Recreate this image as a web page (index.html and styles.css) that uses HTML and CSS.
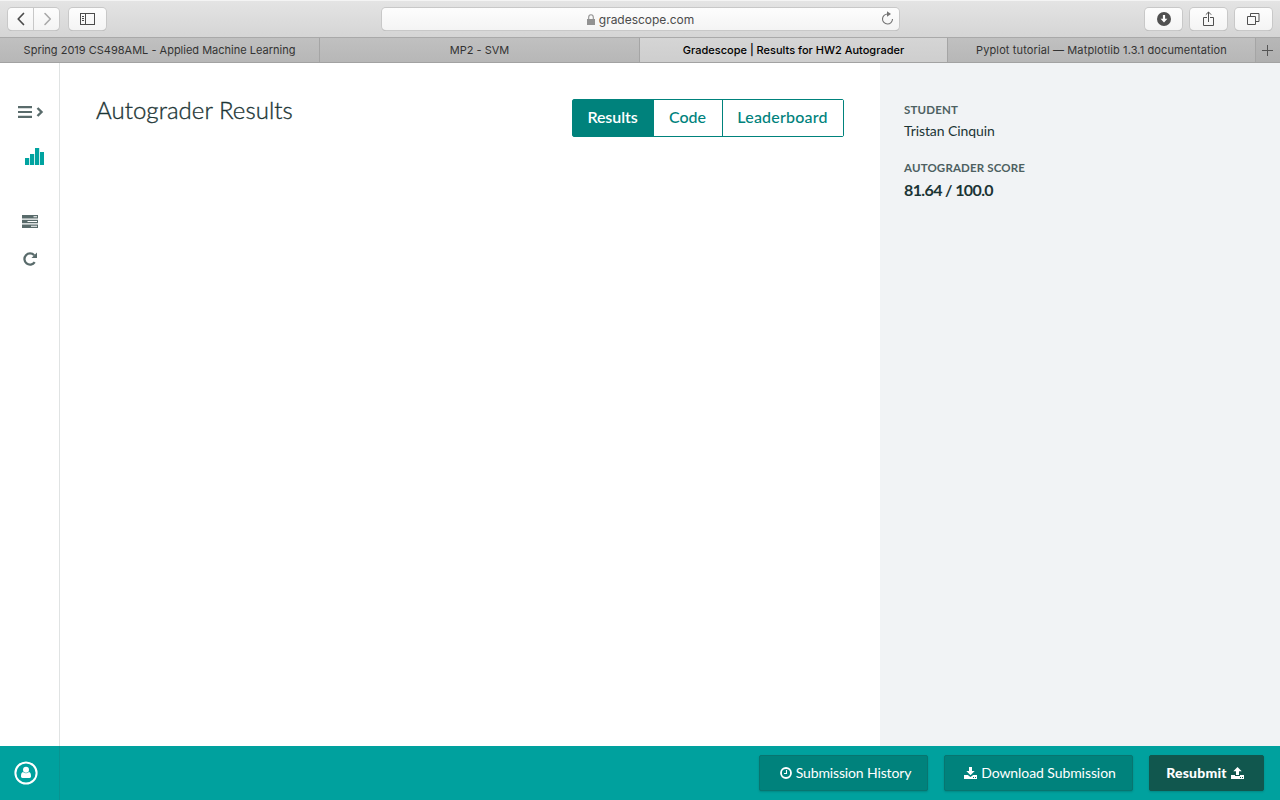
FILE: index.html
```html
<!DOCTYPE html>
<html lang="en">
<head>
<meta charset="utf-8">
<title>Gradescope | Results for HW2 Autograder</title>
<link rel="stylesheet" href="styles.css">
</head>
<body>
<div class="window">
  <header class="toolbar">
    <div class="tool-group">
      <div class="nav-pair">
        <button class="tool nav" aria-label="Back"><svg width="24" height="22" viewBox="0 0 24 22"><path d="M14.500 5.500 9.200 11l5.300 5.500" fill="none" stroke="#4b4b4b" stroke-width="1.700" stroke-linecap="round" stroke-linejoin="round"/></svg></button>
        <button class="tool nav" aria-label="Forward"><svg width="24" height="22" viewBox="0 0 24 22"><path d="m10 5.500 5.300 5.500-5.300 5.500" fill="none" stroke="#a9a9a9" stroke-width="1.600" stroke-linecap="round" stroke-linejoin="round"/></svg></button>
      </div>
      <button class="tool" aria-label="Sidebar"><svg width="16" height="12" viewBox="0 0 16 12" fill="none" stroke="#4b4b4b"><rect x=".5" y=".5" width="14" height="11"/><path d="M5.500 0v12M2 3.500h2M2 5.500h2M2 7.500h2"/></svg></button>
    </div>
    <div class="address">
      <svg width="8" height="11" viewBox="0 0 8 11"><path d="M0 5h8v6H0z" fill="#929292"/><path d="M1.700 5V3.200a2.300 2.400 0 0 1 4.600 0V5" fill="none" stroke="#929292" stroke-width="1.100"/></svg>
      <span class="url">gradescope.com</span>
      <svg class="reload" width="13" height="15" viewBox="0 0 13 15"><path d="M6.700 3A5 5 0 1 0 11.500 8" fill="none" stroke="#737373" stroke-width="1.100"/><path d="M6 .3v5.400L10 3z" fill="#737373"/></svg>
    </div>
    <div class="tool-group right">
      <button class="tool" aria-label="Downloads"><svg width="14" height="14" viewBox="0 0 14 14"><circle cx="7" cy="7" r="7" fill="#505050"/><path d="M5.900 3h2.200v3.700h2.300L7 10.600 3.600 6.700h2.300z" fill="#fff"/></svg></button>
      <button class="tool" aria-label="Share"><svg width="12" height="16" viewBox="0 0 12 16" fill="none" stroke="#505050"><path d="M4 6.500H.5v8h10v-8H7M5.500 11V1M2.800 3.700 5.500 1l2.700 2.700"/></svg></button>
      <button class="tool" aria-label="Tab overview"><svg width="13" height="13" viewBox="0 0 13 13" fill="none" stroke="#505050"><path d="M.5 3.500h8v8h-8zM3.500 3V.5h8.500v8H9"/></svg></button>
    </div>
  </header>
  <nav class="tabs">
    <div class="tab"><span>Spring 2019 CS498AML - Applied Machine Learning</span></div>
    <div class="tab"><span>MP2 - SVM</span></div>
    <div class="tab active"><span>Gradescope | Results for HW2 Autograder</span></div>
    <div class="tab"><span class="spaced">Pyplot tutorial — Matplotlib 1.3.1 documentation</span></div>
    <div class="tab-add"><svg width="12" height="12" viewBox="0 0 12 12"><path d="M0 6.500h11M5.500 1v11" stroke="#555" fill="none"/></svg></div>
  </nav>
  <div class="page">
    <aside class="rail">
      <svg class="menu" width="26" height="12" viewBox="0 0 26 12"><path d="M0 1.100h14M0 6h14M0 10.900h14" stroke="#596b6b" stroke-width="2.200"/><path d="m19.500 2 4 4-4 4" stroke="#596b6b" stroke-width="2.400" fill="none"/></svg>
      <svg class="chart" width="19" height="17" viewBox="0 0 19 17" fill="#00a3a0"><path d="M0 10h4.200v7H0zM5 6h4.200v11H5zM10 0h4.200v17H10zM15 4h4v13h-4z"/></svg>
      <svg class="tasks" width="16" height="13" viewBox="0 0 16 13"><path fill="#596b6b" d="M0 0h16v3.600H0zM0 4.700h16v3.600H0zM0 9.400h16V13H0z"/><path fill="#fff" d="M11.500 1.300H15v1h-3.500zM5.500 6H15v1H5.500zM9 10.700h6v1H9z"/></svg>
      <svg class="redo" width="15" height="14" viewBox="0 0 15 14"><path d="M11.200 3.300A5.600 5.600 0 1 0 11.700 10.200" fill="none" stroke="#596b6b" stroke-width="2.300"/><path d="M14 .5V6H8.500z" fill="#596b6b"/></svg>
    </aside>
    <main class="content">
      <h1>Autograder Results</h1>
      <div class="segmented">
        <button class="seg on"><span>Results</span></button>
        <button class="seg"><span>Code</span></button>
        <button class="seg wide"><span>Leaderboard</span></button>
      </div>
    </main>
    <aside class="details">
      <div class="label">STUDENT</div>
      <div class="name">Tristan Cinquin</div>
      <div class="label">AUTOGRADER SCORE</div>
      <div class="score">81.64 / 100.0</div>
    </aside>
  </div>
  <footer class="actions">
    <div class="account"><svg width="24" height="24" viewBox="0 0 24 24"><circle cx="12" cy="12" r="10.600" fill="none" stroke="#fff" stroke-width="2"/><circle cx="12" cy="8.800" r="3" fill="#fff"/><path d="M9 11c2 1.600 4 1.600 6 0 1.400.4 2 1.700 2 4.300 0 1-.6 1.700-1.500 1.700h-7C7.600 17 7 16.300 7 15.300 7 12.700 7.600 11.400 9 11z" fill="#fff"/></svg></div>
    <div class="buttons">
      <button class="btn history"><svg width="12" height="12" viewBox="0 0 12 12" fill="none" stroke="#fff"><circle cx="6" cy="6" r="5" stroke-width="1.800"/><path d="M6.500 3v3.500H4" stroke-width="1.100"/></svg><span>Submission History</span></button>
      <button class="btn download"><svg width="13" height="12" viewBox="0 0 13 12" fill="#fff"><path d="M5 0h3v4h2.700L6.500 8.200 2.300 4H5zM0 8h3.800l2.700 2 2.700-2H13v4H0z"/><path d="M9 10h1v1H9zM11 10h1v1h-1z" fill="#00827c"/></svg><span>Download Submission</span></button>
      <button class="btn resubmit"><span>Resubmit</span><svg width="13" height="12" viewBox="0 0 13 12" fill="#fff"><path d="M6.500 0l4.200 4.200H8V8H5V4.200H2.300zM0 8h4v1h5V8h4v4H0z"/><path d="M9 10h1v1H9zM11 10h1v1h-1z" fill="#11574e"/></svg></button>
    </div>
  </footer>
</div>
</body>
</html>
```

FILE: styles.css
```css
* { box-sizing: border-box; }
body { margin: 0; font-family: Lato, sans-serif; color: #1c3535; }
button { font: inherit; margin: 0; padding: 0; border: 0; }
svg { display: block; flex: none; }
span, h1, .label, .name, .score { white-space: nowrap; }
.window { width: 1280px; height: 800px; display: flex; flex-direction: column; overflow: hidden; background: #fff; }

.toolbar { height: 37px; display: grid; grid-template-columns: 382px 517px 381px; align-items: start; padding-top: 8px; background: linear-gradient(#f4f4f4 0, #f4f4f4 1px, #e4e4e4 1px, #d5d5d5 100%); font-family: Inter, sans-serif; }
.tool-group { display: flex; gap: 10px; padding-left: 8px; }
.tool-group.right { justify-content: flex-end; gap: 8px; padding: 0 8px 0 0; }
.nav-pair { display: flex; gap: 1px; }
.tool, .address { height: 22px; border-radius: 4px; background: linear-gradient(#fdfdfd, #f4f4f4); box-shadow: 0 0 0 1px #c8c8c8, 0 1px 0 #aaa; display: flex; align-items: center; justify-content: center; }
.tool { width: 37px; }
.tool.nav { width: 25px; }
.nav:first-child { border-radius: 4px 0 0 4px; }
.nav:last-child { border-radius: 0 4px 4px 0; }
.address { position: relative; gap: 4px; font-size: 12px; color: #4b4b4b; }
.url { letter-spacing: -.03px; }
.reload { position: absolute; right: 5px; top: 3px; }

.tabs { height: 26px; display: grid; grid-template-columns: 320px 320px 308px 308px 24px; border-top: 1px solid #a9a9a9; border-bottom: 1px solid #a2a2a2; font: 11px Inter, sans-serif; color: #333; }
.tab, .tab-add { display: flex; align-items: center; justify-content: center; background: linear-gradient(#c0c0c0, #b7b7b7); border-right: 1px solid #a5a5a5; }
.tab.active { background: linear-gradient(#d5d5d5, #cecece); color: #000; font-weight: 500; }
.spaced { letter-spacing: .12px; }
.tab-add { border-right: 0; background: linear-gradient(#b7b7b7, #afafaf); }

.page { flex: 1; min-height: 0; display: grid; grid-template-columns: 60px 820px 400px; }
.rail { border-right: 1px solid #e0e3e3; display: flex; flex-direction: column; padding-top: 43px; }
.menu { margin-left: 18px; }
.chart { margin: 30px 0 0 25px; }
.tasks { margin: 50px 0 0 22px; }
.redo { margin: 24px 0 0 23px; }
.content { display: flex; justify-content: space-between; align-items: flex-start; padding: 36px 36px 0; }
h1 { margin: -4px 0 0; font-size: 24px; line-height: 30px; font-weight: 300; letter-spacing: .05px; -webkit-text-stroke: .35px #1c3535; }
.segmented { display: grid; grid-template-columns: 81px 69px 120px; height: 38px; border: 1px solid #00827c; border-radius: 2px; }
.seg { background: #fff; color: #00827c; border-right: 1px solid #00827c; font-size: 16px; font-weight: 500; padding: 0 1px 3px 0; }
.seg:last-child { border-right: 0; }
.seg.on { background: #00827c; color: #fff; font-weight: 600; letter-spacing: -.1px; }
.seg.wide { letter-spacing: .2px; }
.details { background: #f1f3f5; padding: 40px 24px 0; }
.label { font-size: 11.5px; font-weight: 700; line-height: 14px; letter-spacing: .16px; color: #4d6061; }
.name { font-size: 14px; line-height: 20px; letter-spacing: -.08px; margin: 4px 0 20px; }
.score { font-size: 16px; line-height: 20px; font-weight: 700; letter-spacing: -.62px; margin-top: 5px; }

.actions { height: 54px; background: #00a19e; display: flex; justify-content: space-between; }
.account { width: 60px; border-right: 1px solid #089491; padding: 15px 0 0 14px; }
.buttons { display: flex; gap: 16px; padding: 9px 16px 0 0; }
.btn { height: 36px; display: flex; align-items: center; justify-content: center; gap: 4px; color: #fff; background: #00827c; border: 1px solid #087570; border-radius: 2px; box-shadow: 0 1px 2px #006b6777; font-size: 14px; }
.btn span { padding-bottom: 2px; }
.history { width: 169px; padding-left: 4px; letter-spacing: -.14px; }
.download { width: 189px; padding-left: 3px; letter-spacing: -.08px; }
.resubmit { width: 115px; padding-right: 3px; background: #11574e; border-color: #11574e; font-weight: 900; letter-spacing: .2px; }
```
